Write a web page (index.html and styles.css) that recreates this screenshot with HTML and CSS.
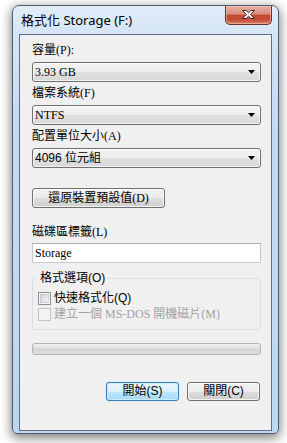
FILE: index.html
```html
<!DOCTYPE html>
<html lang="zh-Hant">
<head>
<meta charset="utf-8">
<title>格式化 Storage (F:)</title>
<link rel="stylesheet" href="styles.css">
</head>
<body>
<div class="window">
  <div class="titlebar">
    <span class="title">格式化 Storage (F:)</span>
    <div class="close">
      <svg width="13" height="9" viewBox="0 0 13 9"><polygon points="0.5,0.5 4,0.5 6.5,2.8 9,0.5 12.5,0.5 8.6,4.5 12.5,8.5 9,8.5 6.5,6.2 4,8.5 0.5,8.5 4.4,4.5" fill="#fff" stroke="#3b2a27" stroke-width="1" stroke-linejoin="round"/></svg>
    </div>
  </div>
  <div class="client">
    <div class="label">容量(P):</div>
    <div class="combo"><span>3.93 GB</span><svg class="arrow" width="7" height="4" viewBox="0 0 7 4"><polygon points="0,0 7,0 3.5,4" fill="#000"/></svg></div>
    <div class="label">檔案系統(F)</div>
    <div class="combo"><span>NTFS</span><svg class="arrow" width="7" height="4" viewBox="0 0 7 4"><polygon points="0,0 7,0 3.5,4" fill="#000"/></svg></div>
    <div class="label">配置單位大小(A)</div>
    <div class="combo"><span class="sans">4096 位元組</span><svg class="arrow" width="7" height="4" viewBox="0 0 7 4"><polygon points="0,0 7,0 3.5,4" fill="#000"/></svg></div>
    <div class="btn restore">還原裝置預設值(D)</div>
    <div class="label label-vol">磁碟區標籤(L)</div>
    <div class="textbox">Storage</div>
    <fieldset class="group">
      <legend class="sans">格式選項(O)</legend>
      <div class="check"><span class="box"></span><span class="sans">快速格式化(Q)</span></div>
      <div class="check disabled"><span class="box"></span><span>建立一個 MS-DOS 開機磁片(M)</span></div>
    </fieldset>
    <div class="progress"></div>
    <div class="actions">
      <div class="btn default sans">開始(S)</div>
      <div class="btn sans">關閉(C)</div>
    </div>
  </div>
</div>
</body>
</html>
```

FILE: styles.css
```css
html, body {
  margin: 0;
  padding: 0;
}
body {
  width: 287px;
  height: 443px;
  overflow: hidden;
  background: #ffffff;
  font-family: "Liberation Serif", "Noto Sans CJK TC", serif;
  font-size: 12px;
  color: #000;
}
.sans {
  font-family: "Liberation Sans", "Noto Sans CJK TC", sans-serif;
}
.window {
  margin: 5px 0 0 12px;
  width: 267px;
  height: 429px;
  box-sizing: border-box;
  border: 1px solid #4e5c6b;
  border-radius: 7px 7px 5px 5px;
  background: linear-gradient(180deg, #e2edf9 0px, #d5e5f6 28px, #c3daf3 120px, #bdd6f2 100%);
  box-shadow: 0 3px 11px 1px rgba(0, 0, 0, 0.5);
  padding: 0 6px 2px;
  display: flex;
  flex-direction: column;
}
.titlebar {
  height: 28px;
  flex: none;
  display: flex;
  justify-content: space-between;
  align-items: flex-start;
}
.title {
  margin: 6px 0 0 2px;
  line-height: 17px;
  font-family: "Noto Sans", "Noto Sans CJK TC", sans-serif;
  font-size: 13px;
  color: #000;
}
.close {
  width: 47px;
  height: 19px;
  box-sizing: border-box;
  border: 1px solid #6a3127;
  border-top: none;
  border-radius: 0 0 5px 5px;
  background: linear-gradient(180deg, #e7b0a4 0%, #d98d7c 45%, #c3472e 52%, #c5503a 78%, #dc8466 100%);
  box-shadow: inset 0 0 0 1px rgba(255, 220, 210, 0.45);
  display: flex;
  align-items: center;
  justify-content: center;
}
.close svg {
  display: block;
  margin-top: -1px;
}
.client {
  height: 397px;
  flex: none;
  box-sizing: border-box;
  border: 1px solid #5f6e7d;
  background: #f0f0f0;
  padding: 7px 10px 0 12px;
  display: flex;
  flex-direction: column;
}
.label {
  height: 17px;
  line-height: 17px;
  margin-bottom: 3px;
  white-space: nowrap;
}
.combo {
  height: 20px;
  box-sizing: border-box;
  border: 1px solid #707070;
  border-radius: 3px;
  background: linear-gradient(180deg, #f4f4f4 0%, #ececec 50%, #e0e0e0 51%, #d8d8d8 100%);
  box-shadow: inset 0 0 0 1px rgba(255, 255, 255, 0.7);
  display: flex;
  align-items: center;
  justify-content: space-between;
  padding: 0 5px 0 2px;
  margin-bottom: 3px;
  line-height: 18px;
}
.arrow {
  display: block;
}
.btn {
  height: 19px;
  box-sizing: border-box;
  border: 1px solid #707070;
  border-radius: 3px;
  background: linear-gradient(180deg, #f2f2f2 0%, #ebebeb 50%, #dddddd 51%, #cfcfcf 100%);
  box-shadow: inset 0 0 0 1px rgba(255, 255, 255, 0.75);
  display: flex;
  align-items: center;
  justify-content: center;
  line-height: 17px;
  white-space: nowrap;
}
.restore {
  width: 133px;
  margin-top: 17px;
  height: 20px;
}
.label-vol {
  margin-top: 16px;
  margin-bottom: 2px;
}
.textbox {
  height: 20px;
  box-sizing: border-box;
  background: #fff;
  border: 1px solid #c5cad2;
  border-top-color: #abadb3;
  padding: 0 2px;
  line-height: 18px;
}
.group {
  margin: 7px 0 0 0;
  padding: 0 0 7px 0;
  border: 1px solid #d5dfe5;
  border-radius: 3px;
  min-width: 0;
}
.group legend {
  margin-left: 4px;
  padding: 0 3px;
  height: 17px;
  line-height: 17px;
}
.check {
  display: flex;
  align-items: center;
  height: 16px;
  line-height: 16px;
  padding-left: 5px;
  white-space: nowrap;
}
.check:first-of-type {
  margin-top: 3px;
}
.box {
  width: 13px;
  height: 13px;
  box-sizing: border-box;
  border: 1px solid #8e8f8f;
  background: linear-gradient(135deg, #c9ccd1 0%, #e6e7e9 55%, #f6f6f6 100%);
  box-shadow: inset 0 0 0 1px #f4f4f4, inset 0 0 0 2px rgba(180, 184, 190, 0.5);
  margin-right: 3px;
  flex: none;
}
.disabled {
  color: #a3a3a3;
}
.disabled .box {
  border-color: #c4c4c4;
  background: #f4f4f4;
  box-shadow: none;
}
.progress {
  margin-top: 13px;
  height: 12px;
  box-sizing: border-box;
  border: 1px solid #b2b2b2;
  border-radius: 3px;
  background: linear-gradient(180deg, #f2f2f2 0%, #dedede 45%, #d4d4d4 55%, #e2e2e2 100%);
}
.actions {
  margin-top: 27px;
  display: flex;
  justify-content: flex-end;
  gap: 8px;
  padding-right: 1px;
}
.actions .btn {
  width: 73px;
}
.btn.default {
  border-color: #3c7fb1;
  background: linear-gradient(180deg, #eaf6fd 0%, #d9f0fc 50%, #bee6fd 51%, #a7d9f5 100%);
  box-shadow: inset 0 0 0 1px rgba(200, 240, 255, 0.9), 0 0 1px #5fc3f0;
}
```
